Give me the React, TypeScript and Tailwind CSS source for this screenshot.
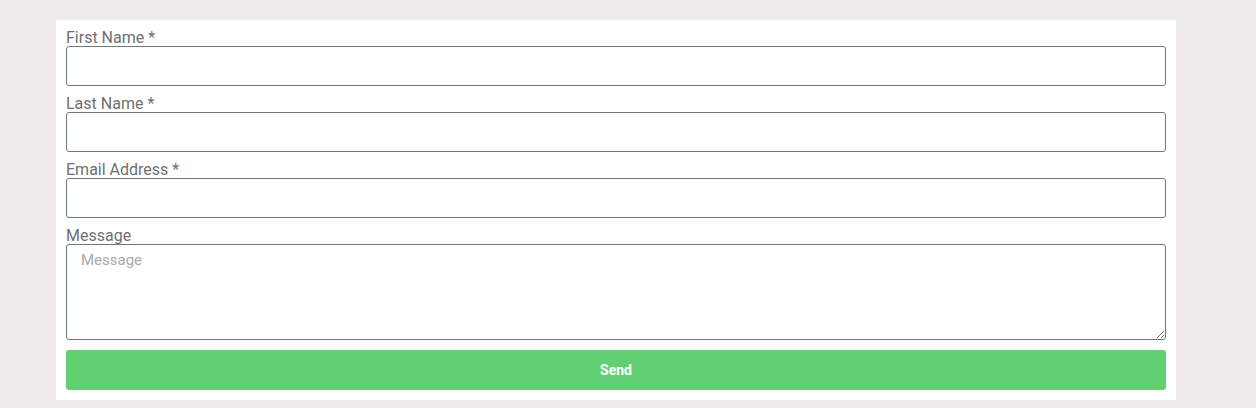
export default function App() {
  return (
    <div className="min-h-screen bg-[#eeeaea] pt-5" style={{ fontFamily: "Roboto, 'Liberation Sans', sans-serif" }}>
      <form className="ml-[56px] w-[1120px] bg-white p-[10px] flex flex-col">
        <label className="text-[16px] leading-[16px] text-[#6f6f6f]">First Name *</label>
        <input className="h-[40px] w-full rounded-[3px] border border-[#6b7785] bg-white px-3 outline-none" />
        <label className="mt-[10px] text-[16px] leading-[16px] text-[#6f6f6f]">Last Name *</label>
        <input className="h-[40px] w-full rounded-[3px] border border-[#6b7785] bg-white px-3 outline-none" />
        <label className="mt-[10px] text-[16px] leading-[16px] text-[#6f6f6f]">Email Address *</label>
        <input className="h-[40px] w-full rounded-[3px] border border-[#6b7785] bg-white px-3 outline-none" />
        <label className="mt-[10px] text-[16px] leading-[16px] text-[#6f6f6f]">Message</label>
        <textarea
          placeholder="Message"
          className="block h-[96px] w-full rounded-[3px] border border-[#6b7785] bg-white px-[14px] py-[5px] text-[15px] leading-[20px] outline-none placeholder:text-[#a9a9a9]"
        />
        <button
          type="button"
          className="mt-[10px] h-[40px] w-full rounded-[3px] bg-[#62d072] text-[14px] font-bold text-white"
        >
          Send
        </button>
      </form>
    </div>
  );
}
